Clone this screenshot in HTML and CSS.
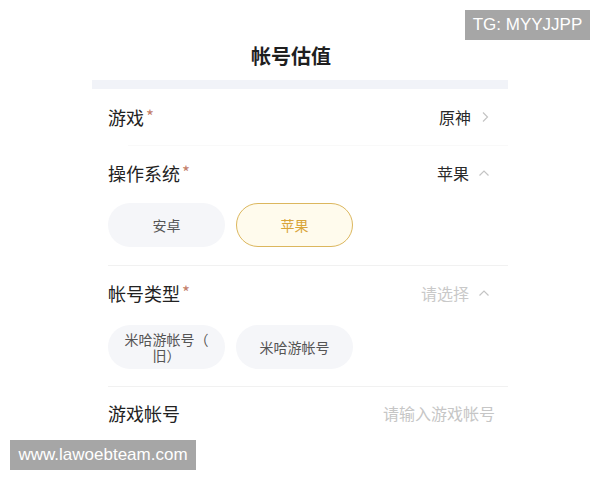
FILE: index.html
```html
<!DOCTYPE html>
<html lang="zh-CN">
<head>
<meta charset="utf-8">
<title>帐号估值</title>
<link rel="stylesheet" href="styles.css">
</head>
<body>
<div class="page">
  <div class="title">帐号估值</div>
  <div class="card">
    <div class="band"></div>
    <div class="row row-game">
      <div class="label">游戏<span class="req">*</span></div>
      <div class="value">原神
        <svg class="chev" width="10" height="12" viewBox="0 0 10 12"><path d="M3 1.5 L7.5 6 L3 10.5" fill="none" stroke="#c4c4c4" stroke-width="1.2"/></svg>
      </div>
    </div>
    <div class="sep sep-faint"></div>
    <div class="section">
      <div class="row row-head">
        <div class="label">操作系统<span class="req">*</span></div>
        <div class="value">苹果
          <svg class="chev" width="12" height="10" viewBox="0 0 12 10"><path d="M1.5 7.5 L6 3 L10.5 7.5" fill="none" stroke="#c4c4c4" stroke-width="1.2"/></svg>
        </div>
      </div>
      <div class="options">
        <div class="opt">安卓</div>
        <div class="opt opt-on">苹果</div>
      </div>
    </div>
    <div class="sep"></div>
    <div class="section">
      <div class="row row-head">
        <div class="label">帐号类型<span class="req">*</span></div>
        <div class="value placeholder">请选择
          <svg class="chev" width="12" height="10" viewBox="0 0 12 10"><path d="M1.5 7.5 L6 3 L10.5 7.5" fill="none" stroke="#c4c4c4" stroke-width="1.2"/></svg>
        </div>
      </div>
      <div class="options options-2">
        <div class="opt opt-wrap">米哈游帐号（旧）</div>
        <div class="opt">米哈游帐号</div>
      </div>
    </div>
    <div class="sep"></div>
    <div class="row row-input">
      <div class="label">游戏帐号</div>
      <div class="value placeholder input-ph">请输入游戏帐号</div>
    </div>
  </div>
  <div class="wm wm-tg">TG: MYYJJPP</div>
  <div class="wm wm-site">www.lawoebteam.com</div>
</div>
</body>
</html>
```

FILE: styles.css
```css
* { box-sizing: border-box; }
html, body { margin: 0; padding: 0; background: #fff; }
body {
  font-family: "Noto Sans CJK SC", "Noto Sans", sans-serif;
  color: #222;
}
.page {
  position: relative;
  width: 600px;
  height: 480px;
  overflow: hidden;
}
.title {
  padding-top: 40px;
  padding-right: 18px;
  height: 80px;
  text-align: center;
  font-size: 20px;
  font-weight: 700;
  line-height: 32px;
  color: #1f1f1f;
}
.card {
  margin: 0 92px;
  width: 416px;
}
.band {
  height: 9px;
  background: #f1f3f8;
}
.row {
  display: flex;
  align-items: center;
  justify-content: space-between;
  padding: 0 16px;
}
.row-game { height: 56px; }
.row-head { height: 54px; }
.row-input { height: 52px; padding-right: 11px; }
.label {
  font-size: 18px;
  line-height: 24px;
  color: #222;
}
.req {
  color: #c3806a;
  font-size: 17px;
  margin-left: 2px;
  position: relative;
  top: -2px;
}
.value {
  display: flex;
  align-items: center;
  gap: 9px;
  font-size: 16px;
  color: #2a2a2a;
  padding-right: 2px;
}
.placeholder { color: #c9c9c9; }
.input-ph { color: #c6c6c6; }
.chev { display: block; }
.sep {
  height: 1px;
  margin-left: 16px;
  background: #f1f1f1;
}
.sep-faint { margin-left: 36px; background: #f9f9f9; }
.options {
  display: flex;
  gap: 11px;
  padding: 3px 16px 18px;
}
.options-2 { padding-top: 5px; padding-bottom: 17px; }
.opt {
  width: 117px;
  height: 44px;
  border-radius: 22px;
  background: #f5f6f9;
  display: flex;
  align-items: center;
  justify-content: center;
  text-align: center;
  font-size: 14px;
  line-height: 16px;
  color: #555;
  padding: 0 16px;
}
.opt-wrap { line-break: anywhere; }
.opt-on {
  background: #fffbed;
  border: 1.5px solid #dcb75e;
  color: #d9a53a;
}
.wm {
  position: absolute;
  background: #a6a6a6;
  color: #fff;
  font-family: "Liberation Sans", Arial, sans-serif;
  font-size: 17px;
  line-height: 30px;
  height: 30px;
  white-space: nowrap;
}
.wm-tg { left: 465px; top: 10px; width: 125px; text-align: center; }
.wm-site { left: 10px; top: 440px; width: 186px; text-align: center; }
```
